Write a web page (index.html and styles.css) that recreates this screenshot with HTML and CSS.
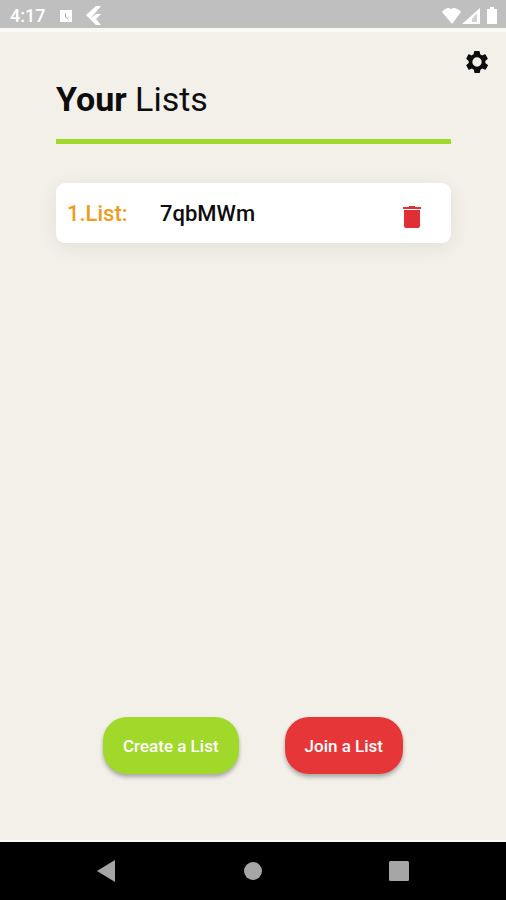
FILE: index.html
```html
<!DOCTYPE html>
<html lang="en">
<head>
<meta charset="utf-8">
<meta name="viewport" content="width=device-width, initial-scale=1">
<title>Your Lists</title>
<link rel="stylesheet" href="styles.css">
</head>
<body>
<header class="status">
  <span class="time">4:17</span>
  <svg class="clock" width="14" height="14" viewBox="0 0 14 14" aria-hidden="true"><path fill="#fff" d="M1 1h12v12H1z"/><path fill="none" stroke="#aaa" d="M6.5 4v4l3 2"/></svg>
  <svg class="flutter" width="18" height="22" viewBox="0 0 18 22" aria-hidden="true"><path fill="#fff" d="M11 1h5L5 14l-4-4zM11 9h5l-5 5 5 6h-5l-6-6z"/></svg>
  <svg class="signals" width="58" height="22" viewBox="0 0 58 22" aria-hidden="true"><path fill="#fff" d="M2 7q3-4 7-4l2 1 2-1q5 0 8 4L12 19z"/><path fill="#fff" d="M40 3v16H22z"/><path fill="#d2d2d2" d="M37 8v9h-5v-3z"/><path fill="#fff" d="M47 4h3V2h4v2h3v15H47z"/></svg>
</header>
<main class="page">
  <div class="toolbar">
    <button class="icon-button" type="button" aria-label="Settings"><svg width="28" height="28" viewBox="0 0 24 24"><path fill="#0b0b0b" fill-rule="evenodd" d="M19.1 12.9a7 7 0 0 0 0-1.8l2-1.6a.5.5 0 0 0 .1-.6l-1.9-3.3a.5.5 0 0 0-.6-.2l-2.4 1a7 7 0 0 0-1.6-1l-.4-2.5a.5.5 0 0 0-.5-.4h-3.8a.5.5 0 0 0-.5.4l-.4 2.5a7 7 0 0 0-1.6 1l-2.4-1a.5.5 0 0 0-.6.2L2.8 8.9a.5.5 0 0 0 .1.6l2 1.6a7 7 0 0 0 0 1.8l-2 1.6a.5.5 0 0 0-.1.6l1.9 3.3a.5.5 0 0 0 .6.2l2.4-1a7 7 0 0 0 1.6 1l.4 2.5a.5.5 0 0 0 .5.4h3.8a.5.5 0 0 0 .5-.4l.4-2.5a7 7 0 0 0 1.6-1l2.4 1a.5.5 0 0 0 .6-.2l1.9-3.3a.5.5 0 0 0-.1-.6zM12 8a4 4 0 1 0 0 8 4 4 0 1 0 0-8z"/></svg></button>
  </div>
  <div class="content">
    <h1 class="title"><strong>Your</strong> Lists</h1>
    <ul class="lists">
      <li class="card">
        <span class="label">1.List:</span>
        <span class="name">7qbMWm</span>
        <button class="icon-button" type="button" aria-label="Delete list"><svg width="18" height="24" viewBox="0 0 18 24"><path fill="#df2f35" d="M6 1h6v1H6zM0 2h18v2H0zM1 5h16v16a2 2 0 0 1-2 2H3a2 2 0 0 1-2-2z"/></svg></button>
      </li>
    </ul>
  </div>
  <div class="actions">
    <button class="action create" type="button">Create a List</button>
    <button class="action join" type="button">Join a List</button>
  </div>
</main>
<nav class="navbar" aria-label="System">
  <button class="icon-button" type="button" aria-label="Back"><svg width="20" height="22" viewBox="0 0 20 22"><path fill="#a6a6a6" d="M18 0v22L0 11z"/></svg></button>
  <button class="icon-button" type="button" aria-label="Home"><svg width="18" height="18" viewBox="0 0 18 18"><circle fill="#a6a6a6" cx="9" cy="9" r="9"/></svg></button>
  <button class="icon-button" type="button" aria-label="Recent apps"><svg width="20" height="20" viewBox="0 0 20 20"><rect fill="#a6a6a6" width="20" height="20" rx="1.5"/></svg></button>
</nav>
</body>
</html>
```
FILE: styles.css
```css
* {
  box-sizing: border-box;
}

body {
  margin: 0;
  min-height: 100vh;
  display: flex;
  flex-direction: column;
  background: #f3f0ea;
  color: #0d0d0d;
  font-family: Roboto, "Liberation Sans", sans-serif;
}

svg {
  display: block;
}

.status {
  display: flex;
  align-items: center;
  height: 28px;
  padding: 4px 8px 0 10px;
  background: #bfbfbf;
  color: #fff;
}

.time {
  font-size: 18px;
  font-weight: 500;
  line-height: 24px;
}

.clock {
  margin-left: 14px;
}

.flutter {
  margin-left: 12px;
}

.signals {
  margin-left: auto;
}

.page {
  flex: 1;
  display: flex;
  flex-direction: column;
  border-top: 4px solid #faf9f6;
  border-bottom: 2px solid #fbfbf9;
}

.toolbar {
  display: flex;
  justify-content: flex-end;
  padding: 16px 15px 0;
}

.icon-button {
  padding: 0;
  border: 0;
  background: none;
}

.content {
  flex: 1;
  padding: 0 55px 0 56px;
}

.title {
  margin: 0;
  padding-bottom: 17px;
  border-bottom: 5px solid #a0d929;
  font-size: 34px;
  font-weight: 400;
  line-height: 46px;
}

.title strong {
  font-weight: 700;
}

.lists {
  margin: 39px 0 0;
  padding: 0;
  list-style: none;
}

.card {
  display: flex;
  align-items: center;
  min-height: 60px;
  padding: 2px 30px 0 11px;
  border-radius: 9px;
  background: #fff;
  box-shadow: 0 4px 20px rgba(0, 0, 0, 0.07);
  font-size: 22px;
  font-weight: 500;
  line-height: 28px;
}

.label {
  flex: 0 0 93px;
  color: #ef9c1b;
}

.name {
  flex: 1;
}

.card .icon-button {
  padding-top: 6px;
}

.actions {
  display: flex;
  justify-content: center;
  gap: 46px;
  padding-bottom: 66px;
}

.action {
  height: 57px;
  padding: 0 20px;
  border: 0;
  border-radius: 24px;
  box-shadow: 0 3px 4px rgba(0, 0, 0, 0.3);
  color: #fff;
  font-family: inherit;
  font-size: 17px;
  font-weight: 500;
}

.create {
  background: #a0d929;
}

.join {
  background: #e73638;
}

.navbar {
  display: flex;
  align-items: center;
  justify-content: space-between;
  height: 58px;
  padding: 0 97px;
  background: #000;
}
```
